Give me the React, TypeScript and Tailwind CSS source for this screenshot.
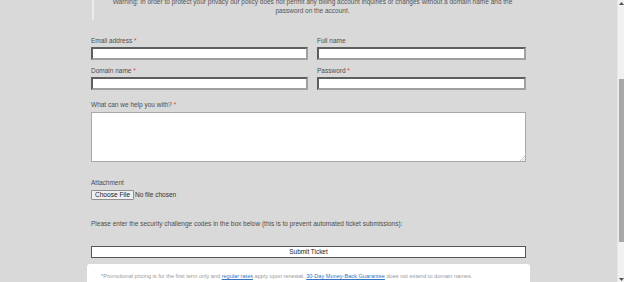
import React from 'react'

const font = { fontFamily: '"Liberation Sans", Arial, sans-serif' }

function Label({ text, required }: { text: string; required?: boolean }) {
  return (
    <div className="text-[6.5px] leading-[8px] text-[#4d4d4d] whitespace-nowrap">
      {text}
      {required && <span className="text-[#e23b3b]"> *</span>}
    </div>
  )
}

function Field({ label, required }: { label: string; required?: boolean }) {
  return (
    <div className="flex flex-col">
      <Label text={label} required={required} />
      <input
        type="text"
        className="mt-[2px] h-[13px] w-full bg-white border-2 border-t-[#5e5e5e] border-l-[#5e5e5e] border-r-[#a0a0a0] border-b-[#a0a0a0] outline-none"
      />
    </div>
  )
}

export default function App() {
  return (
    <div className="w-[624px] h-[282px] overflow-hidden bg-[#d9d9d9] flex" style={font}>
      {/* page */}
      <div className="flex-1 flex flex-col">
        <div className="ml-[91px] w-[435px] flex flex-col">
          {/* warning */}
          <div className="-mt-[3px] ml-[1px] w-[439px] border-l-2 border-[#ebebeb] pb-[5px] text-center text-[6.5px] leading-[9px] text-[#555] whitespace-nowrap">
            Warning: In order to protect your privacy our policy does not permit any billing account inquiries or changes without a domain name and the
            <br />
            password on the account.
          </div>

          {/* fields */}
          <div className="mt-[17px] grid grid-cols-[217px_209px] gap-x-[9px] gap-y-[7px]">
            <Field label="Email address" required />
            <Field label="Full name" />
            <Field label="Domain name" required />
            <Field label="Password" required />
          </div>

          <div className="mt-[11px]">
            <Label text="What can we help you with?" required />
          </div>
          <div className="relative mt-[3px] h-[50px] w-[435px]">
            <textarea className="h-full w-full resize-none bg-white border border-[#a9a9a9] outline-none" />
            <svg className="absolute right-[1px] bottom-[1px]" width="5" height="5" viewBox="0 0 5 5">
              <path d="M5 0L0 5M5 2.5L2.5 5" stroke="#b5b5b5" strokeWidth="0.8" />
            </svg>
          </div>

          <div className="mt-[17px]">
            <Label text="Attachment" />
          </div>
          <div className="mt-[3px] flex items-center">
            <button className="h-[10px] w-[43px] bg-[#efefef] border border-[#8f8f8f] rounded-[1px] text-[6.6px] leading-[8px] text-[#222] flex items-center justify-center">
              Choose File
            </button>
            <span className="ml-[1px] text-[6.5px] leading-[8px] text-[#333]">No file chosen</span>
          </div>

          <div className="mt-[20px] text-[6.5px] leading-[8px] text-[#4d4d4d] whitespace-nowrap">
            Please enter the security challenge codes in the box below (this is to prevent automated ticket submissions):
          </div>

          <button className="mt-[18px] h-[12px] w-[435px] bg-white border border-[#555] text-[6.4px] leading-[10px] text-[#222]">
            Submit Ticket
          </button>
        </div>

        {/* footer */}
        <div className="mt-[6px] ml-[87px] w-[443px] flex-1 bg-white rounded-t-[3px] pt-[9px] pl-[14px] text-[5.6px] leading-[6px] text-[#999] whitespace-nowrap">
          *Promotional pricing is for the first term only and{' '}
          <a className="text-[#3575c4] underline">regular rates</a> apply upon renewal.{' '}
          <a className="text-[#3575c4] underline">30-Day Money-Back Guarantee</a> does not extend to domain names.
        </div>
      </div>

      {/* scrollbar */}
      <div className="w-[7px] h-full bg-[#f1f1f1] border-l border-[#e6e6e6] flex flex-col items-center">
        <div className="h-[6px] flex items-center justify-center">
          <svg width="5" height="3" viewBox="0 0 5 3">
            <path d="M2.5 0L5 3H0z" fill="#505050" />
          </svg>
        </div>
        <div className="mt-[73px] h-[163px] w-[5px] bg-[#a8a8a8]" />
        <div className="flex-1" />
        <div className="h-[6px] flex items-center justify-center">
          <svg width="5" height="3" viewBox="0 0 5 3">
            <path d="M0 0H5L2.5 3z" fill="#505050" />
          </svg>
        </div>
      </div>
    </div>
  )
}
